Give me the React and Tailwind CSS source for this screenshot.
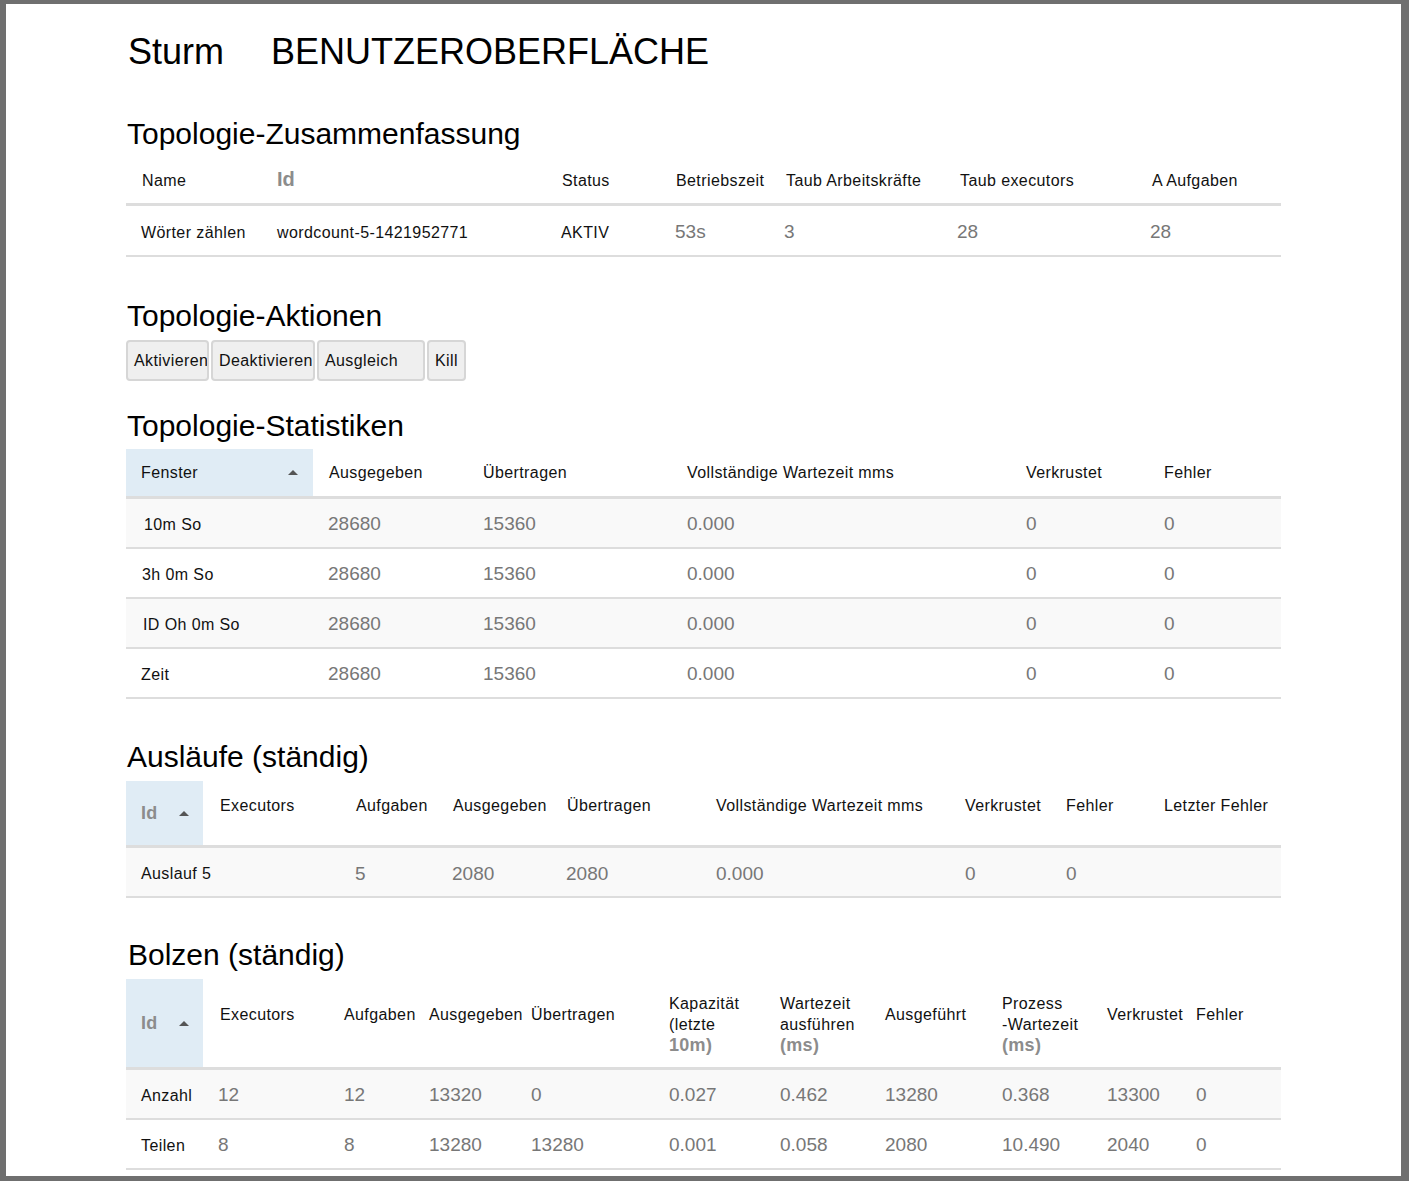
const Tri = () => (
  <span className="inline-block w-0 h-0 border-l-[5px] border-r-[5px] border-b-[5px] border-l-transparent border-r-transparent border-b-[#555]" />
);

const lbl = "text-[16px] tracking-[0.4px] text-[#111] whitespace-nowrap";
const num = "text-[19px] text-[#777] whitespace-nowrap";
const idh = "text-[18px] font-bold text-[#8c8c8c] tracking-[0.3px]";

function Summary() {
  const cols = "grid grid-cols-[136px_285px_114px_110px_174px_192px_144px]";
  return (
    <div className="w-[1155px] mt-[4px]">
      <div className={`${cols} h-[50px] pt-[2px] items-center border-b-[3px] border-[#ddd]`}>
        <div className={`pl-[16px] ${lbl}`}>Name</div>
        <div className={`pl-[15px] text-[20px] font-bold text-[#8c8c8c] -mt-[4px]`}>Id</div>
        <div className={`pl-[15px] ${lbl}`}>Status</div>
        <div className={`pl-[15px] ${lbl}`}>Betriebszeit</div>
        <div className={`pl-[15px] ${lbl}`}>Taub Arbeitskräfte</div>
        <div className={`pl-[15px] ${lbl}`}>Taub executors</div>
        <div className={`pl-[15px] ${lbl}`}>A Aufgaben</div>
      </div>
      <div className={`${cols} h-[51px] pt-[4px] items-center border-b-2 border-[#ddd]`}>
        <div className={`pl-[15px] ${lbl}`}>Wörter zählen</div>
        <div className={`pl-[15px] ${lbl}`}>wordcount-5-1421952771</div>
        <div className={`pl-[14px] ${lbl}`}>AKTIV</div>
        <div className={`pl-[14px] ${num}`}>53s</div>
        <div className={`pl-[13px] ${num}`}>3</div>
        <div className={`pl-[12px] ${num}`}>28</div>
        <div className={`pl-[13px] ${num}`}>28</div>
      </div>
    </div>
  );
}

function Btn({ children, w }) {
  return (
    <div
      className={`${w} h-[41px] flex items-center pl-[6px] bg-[#efefef] border-2 border-[#d6d6d6] rounded-[4px] text-[16px] tracking-[0.4px] text-[#111] whitespace-nowrap overflow-hidden`}
    >
      {children}
    </div>
  );
}

function Stats() {
  const cols = "grid grid-cols-[187px_155px_204px_339px_138px_132px]";
  const rows = [
    ["10m So", "pl-[18px]"],
    ["3h 0m So", "pl-[16px]"],
    ["ID Oh 0m So", "pl-[17px]"],
    ["Zeit", "pl-[15px]"],
  ];
  return (
    <div className="w-[1155px] mt-[5px]">
      <div className={`${cols} h-[50px] border-b-[3px] border-[#ddd]`}>
        <div className={`bg-[#e0ecf5] flex items-center justify-between pl-[15px] pr-[15px] ${lbl}`}>
          <span>Fenster</span>
          <Tri />
        </div>
        <div className={`pl-[16px] flex items-center ${lbl}`}>Ausgegeben</div>
        <div className={`pl-[15px] flex items-center ${lbl}`}>Übertragen</div>
        <div className={`pl-[15px] flex items-center ${lbl}`}>Vollständige Wartezeit mms</div>
        <div className={`pl-[15px] flex items-center ${lbl}`}>Verkrustet</div>
        <div className={`pl-[15px] flex items-center ${lbl}`}>Fehler</div>
      </div>
      {rows.map(([name, pl], i) => (
        <div
          key={name}
          className={`${cols} h-[50px] pt-[3px] items-center border-b-2 border-[#ddd] ${i % 2 === 0 ? "bg-[#f9f9f9]" : "bg-white"}`}
        >
          <div className={`${pl} ${lbl}`}>{name}</div>
          <div className={`pl-[15px] ${num}`}>28680</div>
          <div className={`pl-[15px] ${num}`}>15360</div>
          <div className={`pl-[15px] ${num}`}>0.000</div>
          <div className={`pl-[15px] ${num}`}>0</div>
          <div className={`pl-[15px] ${num}`}>0</div>
        </div>
      ))}
    </div>
  );
}

function Spouts() {
  const cols = "grid grid-cols-[77px_138px_97px_114px_149px_249px_101px_98px_132px]";
  const heads = [
    ["Executors", "pl-[17px]"],
    ["Aufgaben", "pl-[15px]"],
    ["Ausgegeben", "pl-[15px]"],
    ["Übertragen", "pl-[15px]"],
    ["Vollständige Wartezeit mms", "pl-[15px]"],
    ["Verkrustet", "pl-[15px]"],
    ["Fehler", "pl-[15px]"],
    ["Letzter Fehler", "pl-[15px]"],
  ];
  return (
    <div className="w-[1155px] mt-[6px]">
      <div className={`${cols} h-[67px] border-b-[3px] border-[#ddd]`}>
        <div className="bg-[#e0ecf5] flex items-center pl-[15px] gap-[21px]">
          <span className={idh}>Id</span>
          <Tri />
        </div>
        {heads.map(([h, pl]) => (
          <div key={h} className={`${pl} pt-[15px] leading-[20px] ${lbl}`}>
            {h}
          </div>
        ))}
      </div>
      <div className={`${cols} h-[50px] pt-[4px] items-center border-b-2 border-[#ddd] bg-[#f9f9f9]`}>
        <div className={`pl-[15px] ${lbl}`}>Auslauf 5</div>
        <div />
        <div className={`pl-[14px] ${num}`}>5</div>
        <div className={`pl-[14px] ${num}`}>2080</div>
        <div className={`pl-[14px] ${num}`}>2080</div>
        <div className={`pl-[15px] ${num}`}>0.000</div>
        <div className={`pl-[15px] ${num}`}>0</div>
        <div className={`pl-[15px] ${num}`}>0</div>
        <div />
      </div>
    </div>
  );
}

function Bolts() {
  const cols = "grid grid-cols-[77px_126px_85px_102px_138px_111px_105px_117px_105px_89px_100px]";
  const single = `pt-[25px] leading-[21px] ${lbl}`;
  const multi = `pt-[14px] leading-[21px] ${lbl}`;
  const gb = "text-[18px] font-bold text-[#8c8c8c] tracking-[0.3px]";
  const data = [
    ["Anzahl", "12", "12", "13320", "0", "0.027", "0.462", "13280", "0.368", "13300", "0"],
    ["Teilen", "8", "8", "13280", "13280", "0.001", "0.058", "2080", "10.490", "2040", "0"],
  ];
  return (
    <div className="w-[1155px] mt-[6px]">
      <div className={`${cols} h-[91px] border-b-[3px] border-[#ddd]`}>
        <div className="bg-[#e0ecf5] flex items-center pl-[15px] gap-[21px]">
          <span className={idh}>Id</span>
          <Tri />
        </div>
        <div className={`pl-[17px] ${single}`}>Executors</div>
        <div className={`pl-[15px] ${single}`}>Aufgaben</div>
        <div className={`pl-[15px] ${single}`}>Ausgegeben</div>
        <div className={`pl-[15px] ${single}`}>Übertragen</div>
        <div className={`pl-[15px] ${multi}`}>
          <div>Kapazität</div>
          <div>(letzte</div>
          <div className={gb}>10m)</div>
        </div>
        <div className={`pl-[15px] ${multi}`}>
          <div>Wartezeit</div>
          <div>ausführen</div>
          <div className={gb}>(ms)</div>
        </div>
        <div className={`pl-[15px] ${single}`}>Ausgeführt</div>
        <div className={`pl-[15px] ${multi}`}>
          <div>Prozess</div>
          <div>-Wartezeit</div>
          <div className={gb}>(ms)</div>
        </div>
        <div className={`pl-[15px] ${single}`}>Verkrustet</div>
        <div className={`pl-[15px] ${single}`}>Fehler</div>
      </div>
      {data.map((r, i) => (
        <div
          key={r[0]}
          className={`${cols} h-[50px] pt-[3px] items-center border-b-2 border-[#ddd] ${i === 0 ? "bg-[#f9f9f9]" : "bg-white"}`}
        >
          <div className={`pl-[15px] ${lbl}`}>{r[0]}</div>
          {r.slice(1).map((v, j) => (
            <div key={j} className={`pl-[15px] ${num}`}>
              {v}
            </div>
          ))}
        </div>
      ))}
    </div>
  );
}

export default function App() {
  return (
    <div className="w-[1409px] h-[1181px] bg-[#6f6f6f] pt-[4px] pl-[6px] pr-[8px] pb-[5px] font-['Liberation_Sans',Arial,sans-serif] text-black">
      <div className="w-full h-full bg-white overflow-hidden pl-[120px]">
        <h1 className="mt-[28px] h-[40px] text-[36px] leading-[40px] flex whitespace-nowrap pl-[2px]">
          <span>Sturm</span>
          <span className="ml-[47px]">BENUTZEROBERFLÄCHE</span>
        </h1>

        <h2 className="mt-[44px] text-[30px] leading-[36px] pl-[1px]">Topologie-Zusammenfassung</h2>
        <Summary />

        <h2 className="mt-[41px] text-[30px] leading-[36px] pl-[1px]">Topologie-Aktionen</h2>
        <div className="mt-[6px] flex gap-[2px]">
          <Btn w="w-[83px]">Aktivieren</Btn>
          <Btn w="w-[104px]">Deaktivieren</Btn>
          <Btn w="w-[108px]">Ausgleich</Btn>
          <Btn w="w-[39px]">Kill</Btn>
        </div>

        <h2 className="mt-[27px] text-[30px] leading-[36px] pl-[1px]">Topologie-Statistiken</h2>
        <Stats />

        <h2 className="mt-[40px] text-[30px] leading-[36px] pl-[1px]">Ausläufe (ständig)</h2>
        <Spouts />

        <h2 className="mt-[39px] text-[30px] leading-[36px] pl-[2px]">Bolzen (ständig)</h2>
        <Bolts />
      </div>
    </div>
  );
}
